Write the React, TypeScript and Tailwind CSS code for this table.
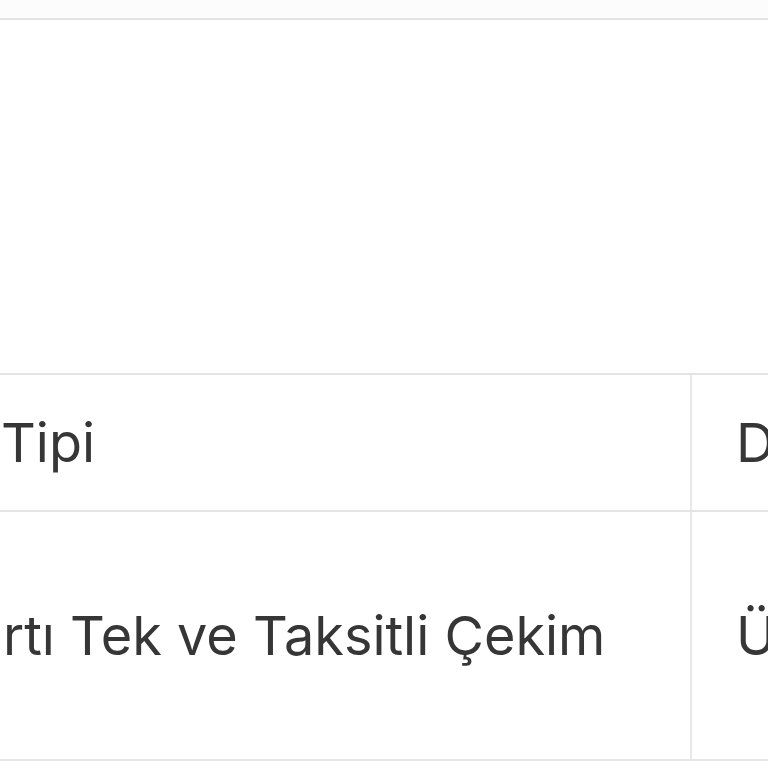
export default function App() {
  return (
    <div className="w-[768px] h-[768px] overflow-hidden bg-white" style={{ fontFamily: 'Inter, "Noto Sans", sans-serif' }}>
      <div className="h-[18px] bg-[#fcfcfc]" />
      <div className="h-[2px] bg-[#e4e4e4]" />
      <div className="h-[353px]" />
      <div className="border-t-2 border-b-2 border-[#e4e4e4]">
        <div className="flex h-[137px] border-b-2 border-[#e4e4e4]">
          <div className="w-[692px] flex items-center border-r-2 border-[#e8e8e8] overflow-hidden">
            <span className="text-[54px] text-[#363636] whitespace-nowrap pl-[1px]">Tipi</span>
          </div>
          <div className="flex-1 flex items-center pl-[44px] overflow-hidden">
            <span className="text-[54px] text-[#363636] whitespace-nowrap">Durum</span>
          </div>
        </div>
        <div className="flex h-[247px]">
          <div className="w-[692px] flex items-center border-r-2 border-[#e8e8e8] overflow-hidden">
            <span className="text-[54px] text-[#363636] whitespace-nowrap pl-[3px]">rtı Tek ve Taksitli Çekim</span>
          </div>
          <div className="flex-1 flex items-center pl-[44px] overflow-hidden">
            <span className="text-[54px] text-[#363636] whitespace-nowrap">Ücret</span>
          </div>
        </div>
      </div>
    </div>
  );
}
